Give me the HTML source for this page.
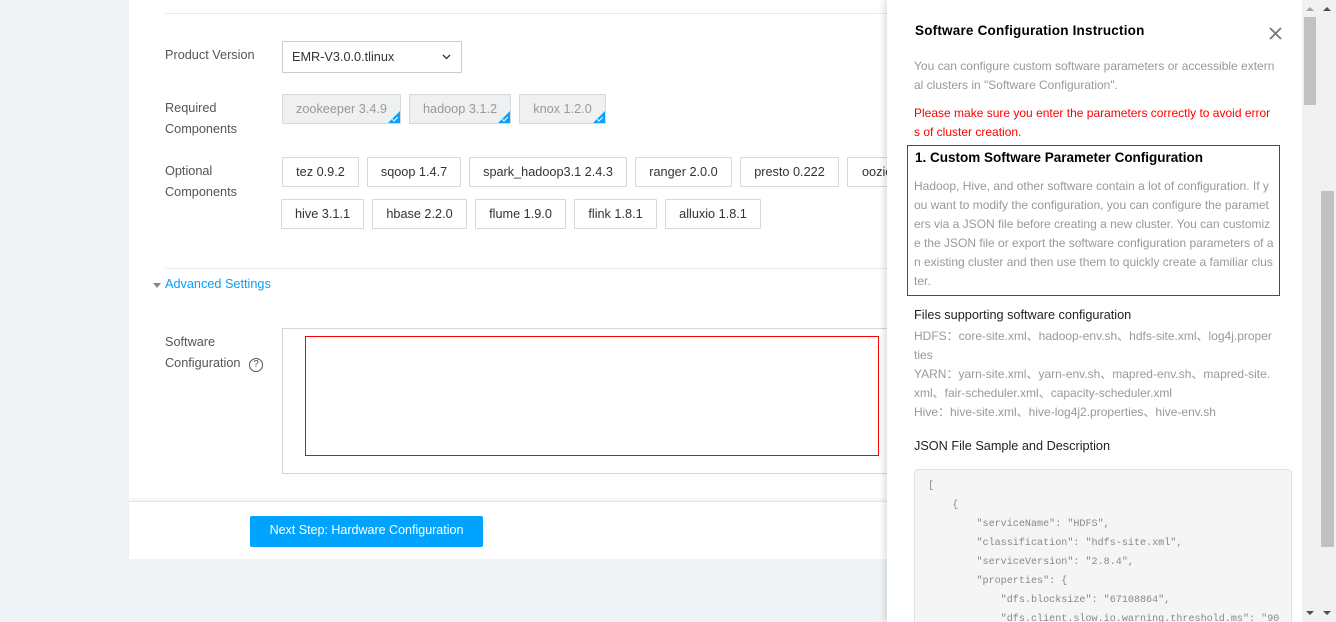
<!DOCTYPE html>
<html style="overflow:hidden;width:1336px;height:622px"><head><meta charset="utf-8"><style>
*{box-sizing:border-box;margin:0;padding:0}
body{width:1336px;height:622px;overflow:hidden;background:#eff3f6;font-family:"Liberation Sans",Arial,sans-serif;position:relative;color:#444}
.a{position:absolute}
.card{left:129px;top:0;width:1200px;height:501px;background:#fff}
.foot{left:129px;top:501px;width:1200px;height:58px;background:#fff;border-top:1px solid #e3e6ea;box-shadow:0 -2px 3px rgba(0,0,0,.05)}
.lbl{font-size:12.7px;color:#555;line-height:21px}
.btn{height:30px;border:1px solid #d5d8dc;font-size:12.7px;color:#333;line-height:28px;text-align:center;background:#fff;border-radius:1px;white-space:nowrap;overflow:hidden}
.req{background:#eef0f2;color:#999;border-color:#d5d8dc}
.req i{position:absolute;right:-1px;bottom:-1px;width:0;height:0;border-left:14px solid transparent;border-bottom:14px solid #0aa1ff}
.req b{position:absolute;right:2px;bottom:3px;width:6px;height:3px;border-left:1px solid #fff;border-bottom:1px solid #fff;transform:rotate(-45deg)}
.panel{left:887px;top:0;width:415px;height:622px;background:#fff;box-shadow:-3px 0 6px rgba(0,0,0,.12);overflow:hidden}
.g{font-size:12px;color:#999;line-height:19px}
.code{font-family:"Liberation Mono",monospace;font-size:10.1px;color:#888;white-space:pre;line-height:19px}
</style></head><body>
<div class="a card"></div>
<div class="a" style="left:165px;top:13px;width:730px;height:1px;background:#e8ebee"></div>
<div class="a lbl" style="left:165px;top:45px">Product Version</div>
<div class="a" style="left:282px;top:41px;width:180px;height:32px;border:1px solid #ccc;font-size:12.7px;color:#333;line-height:30px;padding-left:9px">EMR-V3.0.0.tlinux
<svg class="a" style="left:159px;top:12px" width="9" height="6"><path d="M1 1l3.5 3.5L8 1" stroke="#333" stroke-width="1.3" fill="none"/></svg></div>
<div class="a lbl" style="left:165px;top:98px">Required<br>Components</div>
<div class="a btn req" style="left:282px;top:94px;width:119px">zookeeper 3.4.9<i></i><b></b></div>
<div class="a btn req" style="left:409px;top:94px;width:102px">hadoop 3.1.2<i></i><b></b></div>
<div class="a btn req" style="left:519px;top:94px;width:87px">knox 1.2.0<i></i><b></b></div>
<div class="a lbl" style="left:165px;top:161px">Optional<br>Components</div>
<div class="a btn" style="left:282px;top:157px;width:77px">tez 0.9.2</div>
<div class="a btn" style="left:367px;top:157px;width:94px">sqoop 1.4.7</div>
<div class="a btn" style="left:469px;top:157px;width:158px">spark_hadoop3.1 2.4.3</div>
<div class="a btn" style="left:635px;top:157px;width:97px">ranger 2.0.0</div>
<div class="a btn" style="left:740px;top:157px;width:99px">presto 0.222</div>
<div class="a btn" style="left:847px;top:157px;width:80px;text-align:left;padding-left:14px">oozie 4.3.1</div>
<div class="a btn" style="left:281px;top:199px;width:83px">hive 3.1.1</div>
<div class="a btn" style="left:372px;top:199px;width:95px">hbase 2.2.0</div>
<div class="a btn" style="left:475px;top:199px;width:91px">flume 1.9.0</div>
<div class="a btn" style="left:574px;top:199px;width:83px">flink 1.8.1</div>
<div class="a btn" style="left:665px;top:199px;width:96px">alluxio 1.8.1</div>
<div class="a" style="left:165px;top:268px;width:730px;height:1px;background:#e8ebee"></div>
<div class="a" style="left:153px;top:283px;width:0;height:0;border-left:4px solid transparent;border-right:4px solid transparent;border-top:5px solid #888"></div>
<div class="a" style="left:165px;top:276px;font-size:12.7px;color:#0a9ff5;line-height:17px">Advanced Settings</div>
<div class="a lbl" style="left:165px;top:332px">Software<br>Configuration</div>
<div class="a" style="left:249px;top:358px;width:14px;height:14px;border:1px solid #555;border-radius:50%;font-size:10px;line-height:12px;text-align:center;color:#555">?</div>
<div class="a" style="left:282px;top:328px;width:620px;height:146px;border:1px solid #d5d5d5"></div>
<div class="a" style="left:305px;top:336px;width:574px;height:120px;border:1px solid #f00"></div>
<div class="a foot"></div>
<div class="a" style="left:250px;top:516px;width:233px;height:31px;background:#00a4ff;border-radius:2px;color:#fff;font-size:12.5px;line-height:29px;text-align:center">Next Step: Hardware Configuration</div>

<div class="a panel">
<div class="a" style="left:28px;top:23px;font-size:13.5px;font-weight:bold;color:#000;letter-spacing:.2px">Software Configuration Instruction</div>
<svg class="a" style="left:382px;top:27px" width="13" height="13"><path d="M1 1l11 11M12 1L1 12" stroke="#777" stroke-width="1.8"/></svg>
<div class="a g" style="left:27px;top:57px;width:365px">You can configure custom software parameters or accessible extern<br>al clusters in "Software Configuration".</div>
<div class="a g" style="left:27px;top:104px;color:#f00">Please make sure you enter the parameters correctly to avoid error<br>s of cluster creation.</div>
<div class="a" style="left:20px;top:145px;width:373px;height:151px;border:1px solid #f00"></div>
<div class="a" style="left:28px;top:150px;font-size:13.5px;font-weight:bold;color:#000">1. Custom Software Parameter Configuration</div>
<div class="a g" style="left:27px;top:177px">Hadoop, Hive, and other software contain a lot of configuration. If y<br>ou want to modify the configuration, you can configure the paramet<br>ers via a JSON file before creating a new cluster. You can customiz<br>e the JSON file or export the software configuration parameters of a<br>n existing cluster and then use them to quickly create a familiar clus<br>ter.</div>
<div class="a" style="left:27px;top:308px;font-size:12.7px;color:#222">Files supporting software configuration</div>
<div class="a g" style="left:27px;top:327px">HDFS：core-site.xml、hadoop-env.sh、hdfs-site.xml、log4j.proper<br>ties<br>YARN：yarn-site.xml、yarn-env.sh、mapred-env.sh、mapred-site.<br>xml、fair-scheduler.xml、capacity-scheduler.xml<br>Hive：hive-site.xml、hive-log4j2.properties、hive-env.sh</div>
<div class="a" style="left:27px;top:439px;font-size:12.7px;color:#222">JSON File Sample and Description</div>
<div class="a" style="left:27px;top:469px;width:378px;height:170px;background:#f5f5f5;border:1px solid #e2e2e2;border-radius:4px"></div>
<div class="a code" style="left:41px;top:477px">[
    {
        "serviceName": "HDFS",
        "classification": "hdfs-site.xml",
        "serviceVersion": "2.8.4",
        "properties": {
            "dfs.blocksize": "67108864",
            "dfs.client.slow.io.warning.threshold.ms": "90</div>
</div>
<div class="a" style="left:1302px;top:0;width:16px;height:622px;background:#f1f1f1"></div>
<div class="a" style="left:1304px;top:17px;width:12px;height:88px;background:#c1c1c1"></div>
<div class="a" style="left:1306px;top:7px;border-left:4px solid transparent;border-right:4px solid transparent;border-bottom:4px solid #a3a3a3"></div>
<div class="a" style="left:1306px;top:611px;border-left:4px solid transparent;border-right:4px solid transparent;border-top:4px solid #505050"></div>
<div class="a" style="left:1318px;top:0;width:18px;height:622px;background:#f1f1f1"></div>
<div class="a" style="left:1321px;top:191px;width:13px;height:356px;background:#c1c1c1"></div>
<div class="a" style="left:1323px;top:7px;border-left:4px solid transparent;border-right:4px solid transparent;border-bottom:4px solid #505050"></div>
<div class="a" style="left:1323px;top:611px;border-left:4px solid transparent;border-right:4px solid transparent;border-top:4px solid #505050"></div>
</body></html>
